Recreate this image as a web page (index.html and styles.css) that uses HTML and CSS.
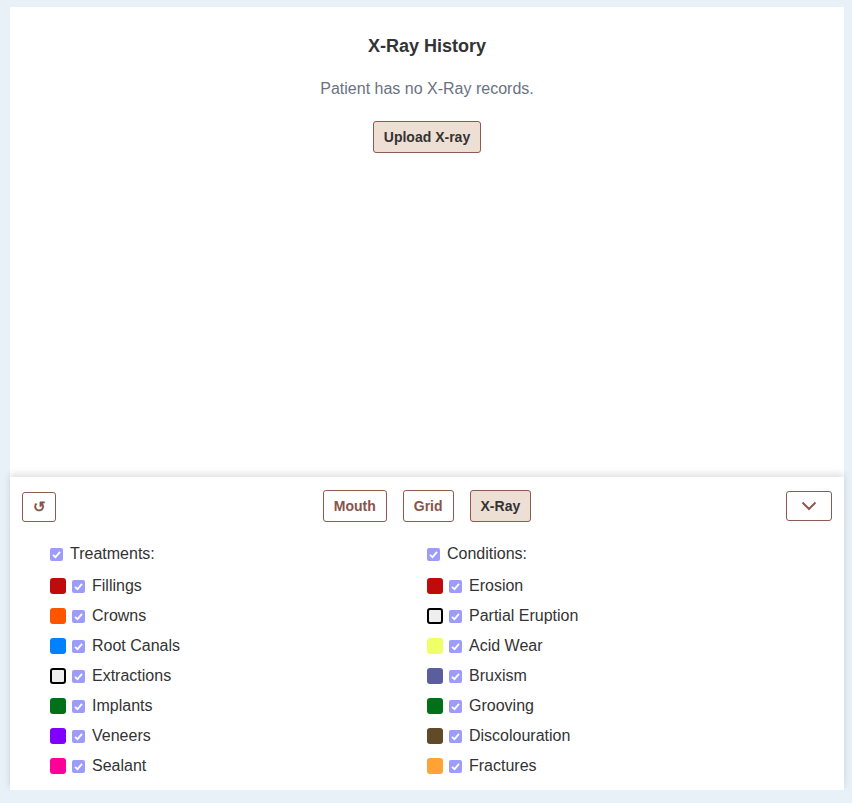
FILE: index.html
```html
<!DOCTYPE html>
<html>
<head>
<meta charset="utf-8">
<link rel="stylesheet" href="styles.css">
</head>
<body>
<div class="page">
  <section class="history">
    <h2 class="title">X-Ray History</h2>
    <p class="empty">Patient has no X-Ray records.</p>
    <button class="btn btn-active upload">Upload X-ray</button>
  </section>
  <section class="controls">
    <div class="toolbar">
      <button class="btn reset">↺</button>
      <div class="views">
        <button class="btn view">Mouth</button>
        <button class="btn view">Grid</button>
        <button class="btn view btn-active">X-Ray</button>
      </div>
      <button class="btn collapse"><svg width="16" height="10" viewBox="0 0 16 10"><polyline points="1.5,1.5 8,8 14.5,1.5" fill="none" stroke="#8a5a50" stroke-width="2"/></svg></button>
    </div>
    <div class="legend">
      <div class="col">
        <div class="head"><span class="cb"></span>Treatments:</div>
        <div class="row"><span class="sw" style="background:#c00b0b"></span><span class="cb"></span>Fillings</div>
        <div class="row"><span class="sw" style="background:#ff5400"></span><span class="cb"></span>Crowns</div>
        <div class="row"><span class="sw" style="background:#0082ff"></span><span class="cb"></span>Root Canals</div>
        <div class="row"><span class="sw sw-empty"></span><span class="cb"></span>Extractions</div>
        <div class="row"><span class="sw" style="background:#007119"></span><span class="cb"></span>Implants</div>
        <div class="row"><span class="sw" style="background:#8000ff"></span><span class="cb"></span>Veneers</div>
        <div class="row"><span class="sw" style="background:#ff0099"></span><span class="cb"></span>Sealant</div>
      </div>
      <div class="col">
        <div class="head"><span class="cb"></span>Conditions:</div>
        <div class="row"><span class="sw" style="background:#c00b0b"></span><span class="cb"></span>Erosion</div>
        <div class="row"><span class="sw sw-empty"></span><span class="cb"></span>Partial Eruption</div>
        <div class="row"><span class="sw" style="background:#efff66"></span><span class="cb"></span>Acid Wear</div>
        <div class="row"><span class="sw" style="background:#5a5e9e"></span><span class="cb"></span>Bruxism</div>
        <div class="row"><span class="sw" style="background:#007119"></span><span class="cb"></span>Grooving</div>
        <div class="row"><span class="sw" style="background:#604a2a"></span><span class="cb"></span>Discolouration</div>
        <div class="row"><span class="sw" style="background:#ffa334"></span><span class="cb"></span>Fractures</div>
      </div>
    </div>
  </section>
</div>
</body>
</html>
```
FILE: styles.css
```css
* { box-sizing: border-box; }
html, body { margin: 0; padding: 0; }
body {
  background: #e8f0f8;
  font-family: "Liberation Sans", Arial, sans-serif;
  color: #333;
}
.page {
  margin: 7px 8px 0 10px;
  display: flex;
  flex-direction: column;
}
.history {
  background: #fff;
  height: 470px;
  padding-top: 28px;
  display: flex;
  flex-direction: column;
  align-items: center;
}
.title {
  margin: 0;
  font-size: 18px;
  line-height: 22px;
  font-weight: bold;
  color: #333;
}
.empty {
  margin: 22px 0 0;
  font-size: 16px;
  line-height: 20px;
  color: #6b7280;
}
.btn {
  font-family: "Liberation Sans", Arial, sans-serif;
  font-weight: bold;
  font-size: 14px;
  background: #fff;
  color: #8a5348;
  border: 1px solid #8c5a4f;
  border-radius: 3px;
  padding: 0;
  cursor: pointer;
}
.btn-active {
  background: #eedfd4;
  color: #333;
}
.upload {
  margin-top: 22px;
  width: 108px;
  height: 32px;
}
.controls {
  background: #fff;
  padding: 13px 12px 9px;
  box-shadow: 0 -3px 7px rgba(0,0,0,0.13);
  position: relative;
}
.toolbar {
  display: grid;
  grid-template-columns: 1fr auto 1fr;
  align-items: center;
  height: 32px;
}
.views {
  display: flex;
  gap: 16px;
}
.view { height: 32px; padding: 0 10px; }
.reset {
  justify-self: start;
  width: 34px;
  height: 30px;
  font-size: 15px;
  font-weight: bold;
  margin-top: 2px;
}
.collapse {
  justify-self: end;
  width: 46px;
  height: 30px;
  display: flex;
  align-items: center;
  justify-content: center;
}
.legend {
  display: grid;
  grid-template-columns: 377px 377px;
  padding-left: 28px;
  margin-top: 17px;
}
.col { display: flex; flex-direction: column; }
.head, .row {
  display: flex;
  align-items: center;
  height: 30px;
  font-size: 16px;
}
.head { margin-bottom: 2px; }
.cb {
  width: 13px;
  height: 13px;
  border-radius: 2px;
  background: #9d9cfb url("data:image/svg+xml;utf8,<svg xmlns='http://www.w3.org/2000/svg' viewBox='0 0 13 13'><polyline points='3,6.8 5.5,9.2 10,3.8' fill='none' stroke='white' stroke-width='1.8'/></svg>") center/13px 13px no-repeat;
  margin-right: 7px;
  flex: none;
}
.sw {
  width: 16px;
  height: 16px;
  border-radius: 3px;
  margin-right: 6px;
  flex: none;
}
.sw-empty {
  background: #eee;
  border: 2px solid #000;
}
```
